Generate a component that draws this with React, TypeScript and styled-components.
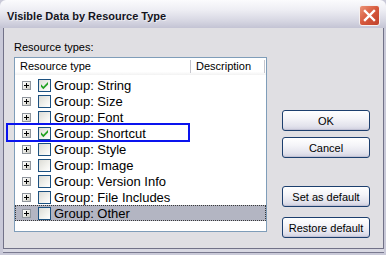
import React from 'react';
import styled, { createGlobalStyle } from 'styled-components';

const Global = createGlobalStyle`
  html, body { margin: 0; padding: 0; background: #ffffff; }
  body { font-family: "Liberation Sans", Arial, sans-serif; }
  #root { width: 386px; height: 255px; overflow: hidden; }
`;

const Window = styled.div`
  position: relative;
  width: 386px;
  height: 255px;
  display: flex;
  flex-direction: column;
  background: #c9c9d8;
  box-sizing: border-box;
`;

const TitleBar = styled.div`
  height: 28px;
  flex: none;
  display: flex;
  align-items: flex-start;
  justify-content: space-between;
  padding: 0 6px 0 7px;
  box-sizing: border-box;
  border-radius: 6px 6px 0 0;
  background: linear-gradient(#fbfbfd 0%, #eeeef4 35%, #d6d6e2 75%, #c4c4d4 100%);
`;

const Title = styled.span`
  font: bold 11px "Liberation Sans", Arial, sans-serif;
  color: #14141e;
  line-height: 14px;
  margin-top: 9px;
  text-shadow: 1px 1px 0 rgba(255, 255, 255, 0.5);
`;

const CloseButton = styled.div`
  width: 21px;
  height: 21px;
  margin-top: 5px;
  box-sizing: border-box;
  border: 1px solid #f4f0f0;
  border-radius: 3px;
  background: linear-gradient(135deg, #ec9478 0%, #d6583c 50%, #c0412b 100%);
  display: flex;
  align-items: center;
  justify-content: center;
`;

const Body = styled.div`
  flex: 1;
  margin: 0 2px 6px 3px;
  border: 1px solid #727288;
  border-top: none;
  background: #e0dfe3;
  display: flex;
  padding: 13px 0 0 10px;
  box-shadow: 0 3px 0 #d8d8e2, 0 4px 0 #7a7a90;
`;

const LeftColumn = styled.div`
  width: 253px;
  flex: none;
  display: flex;
  flex-direction: column;
`;

const Label = styled.div`
  font-size: 11px;
  line-height: 13px;
  color: #000;
  margin-bottom: 3px;
`;

const ListBox = styled.div`
  width: 253px;
  height: 175px;
  box-sizing: border-box;
  border: 1px solid #7f9db9;
  background: #ffffff;
  display: flex;
  flex-direction: column;
`;

const Header = styled.div`
  height: 17px;
  flex: none;
  display: flex;
  background: linear-gradient(#ffffff 0%, #ffffff 80%, #f2f2f2 100%);
`;

const HeaderCell = styled.div<{ $w: number }>`
  width: ${p => p.$w}px;
  height: 13px;
  margin-top: 2px;
  box-sizing: border-box;
  padding-left: 5px;
  border-right: 1px solid #c5c5cc;
  font-size: 11px;
  line-height: 13px;
  color: #000;
`;

const Rows = styled.div`
  padding-top: 2px;
  display: flex;
  flex-direction: column;
`;

const Row = styled.div<{ $selected?: boolean }>`
  height: 16px;
  box-sizing: border-box;
  display: flex;
  align-items: center;
  padding-left: 6px;
  border: 1px ${p => (p.$selected ? 'dotted #3a3a3a' : 'solid transparent')};
  background: ${p => (p.$selected ? '#b3b5c2' : 'transparent')};
`;

const Expander = styled.div`
  width: 9px;
  height: 9px;
  flex: none;
  box-sizing: border-box;
  border: 1px solid #8f959c;
  background: linear-gradient(135deg, #ffffff 0%, #e6e6e0 60%, #c4c4bc 100%);
  display: flex;
  align-items: center;
  justify-content: center;
`;

const CheckBox = styled.div`
  width: 13px;
  height: 13px;
  flex: none;
  margin-left: 7px;
  box-sizing: border-box;
  border: 1px solid #1c5180;
  background: linear-gradient(135deg, #dcdcd6 0%, #f2f2ee 60%, #ffffff 100%);
  display: flex;
  align-items: center;
  justify-content: center;
`;

const RowText = styled.span`
  margin-left: 3px;
  font-size: 13px;
  line-height: 15px;
  color: #000;
  white-space: nowrap;
`;

const ButtonColumn = styled.div`
  margin-left: 15px;
  display: flex;
  flex-direction: column;
`;

const Button = styled.div<{ $top: number }>`
  width: 88px;
  height: 21px;
  margin-top: ${p => p.$top}px;
  box-sizing: border-box;
  border: 1px solid #1d3f6e;
  border-radius: 3px;
  background: linear-gradient(#ffffff 0%, #f4f4f8 40%, #e2e2ec 80%, #cfcfdf 100%);
  box-shadow: inset 0 -1px 0 #c2c2d4;
  display: flex;
  align-items: center;
  justify-content: center;
  font-size: 11px;
  color: #000;
`;

const Annotation = styled.div`
  position: absolute;
  left: 6px;
  top: 123px;
  width: 184px;
  height: 19px;
  box-sizing: border-box;
  border: 2px solid #0a14ee;
  pointer-events: none;
`;

const items = [
  { name: 'String', checked: true },
  { name: 'Size', checked: false },
  { name: 'Font', checked: false },
  { name: 'Shortcut', checked: true },
  { name: 'Style', checked: false },
  { name: 'Image', checked: false },
  { name: 'Version Info', checked: false },
  { name: 'File Includes', checked: false },
  { name: 'Other', checked: false, selected: true },
];

const PlusIcon = () => (
  <svg width="7" height="7" viewBox="0 0 7 7">
    <path d="M1 3.5 H6 M3.5 1 V6" stroke="#000" strokeWidth="1" />
  </svg>
);

const CheckIcon = () => (
  <svg width="11" height="11" viewBox="0 0 11 11">
    <path d="M2 4.3 L4.3 6.8 L9 2 L9 4.5 L4.3 9.2 L2 6.8 Z" fill="#21a121" />
  </svg>
);

const CloseIcon = () => (
  <svg width="13" height="13" viewBox="0 0 13 13">
    <path d="M2 2 L11 11 M11 2 L2 11" stroke="#fff" strokeWidth="2.4" strokeLinecap="square" />
  </svg>
);

export default function App() {
  return (
    <>
      <Global />
      <Window>
        <TitleBar>
          <Title>Visible Data by Resource Type</Title>
          <CloseButton>
            <CloseIcon />
          </CloseButton>
        </TitleBar>
        <Body>
          <LeftColumn>
            <Label>Resource types:</Label>
            <ListBox>
              <Header>
                <HeaderCell $w={176}>Resource type</HeaderCell>
                <HeaderCell $w={74}>Description</HeaderCell>
              </Header>
              <Rows>
                {items.map(it => (
                  <Row key={it.name} $selected={it.selected}>
                    <Expander>
                      <PlusIcon />
                    </Expander>
                    <CheckBox>{it.checked && <CheckIcon />}</CheckBox>
                    <RowText>Group: {it.name}</RowText>
                  </Row>
                ))}
              </Rows>
            </ListBox>
          </LeftColumn>
          <ButtonColumn>
            <Button $top={69}>OK</Button>
            <Button $top={6}>Cancel</Button>
            <Button $top={28}>Set as default</Button>
            <Button $top={10}>Restore default</Button>
          </ButtonColumn>
        </Body>
        <Annotation />
      </Window>
    </>
  );
}
